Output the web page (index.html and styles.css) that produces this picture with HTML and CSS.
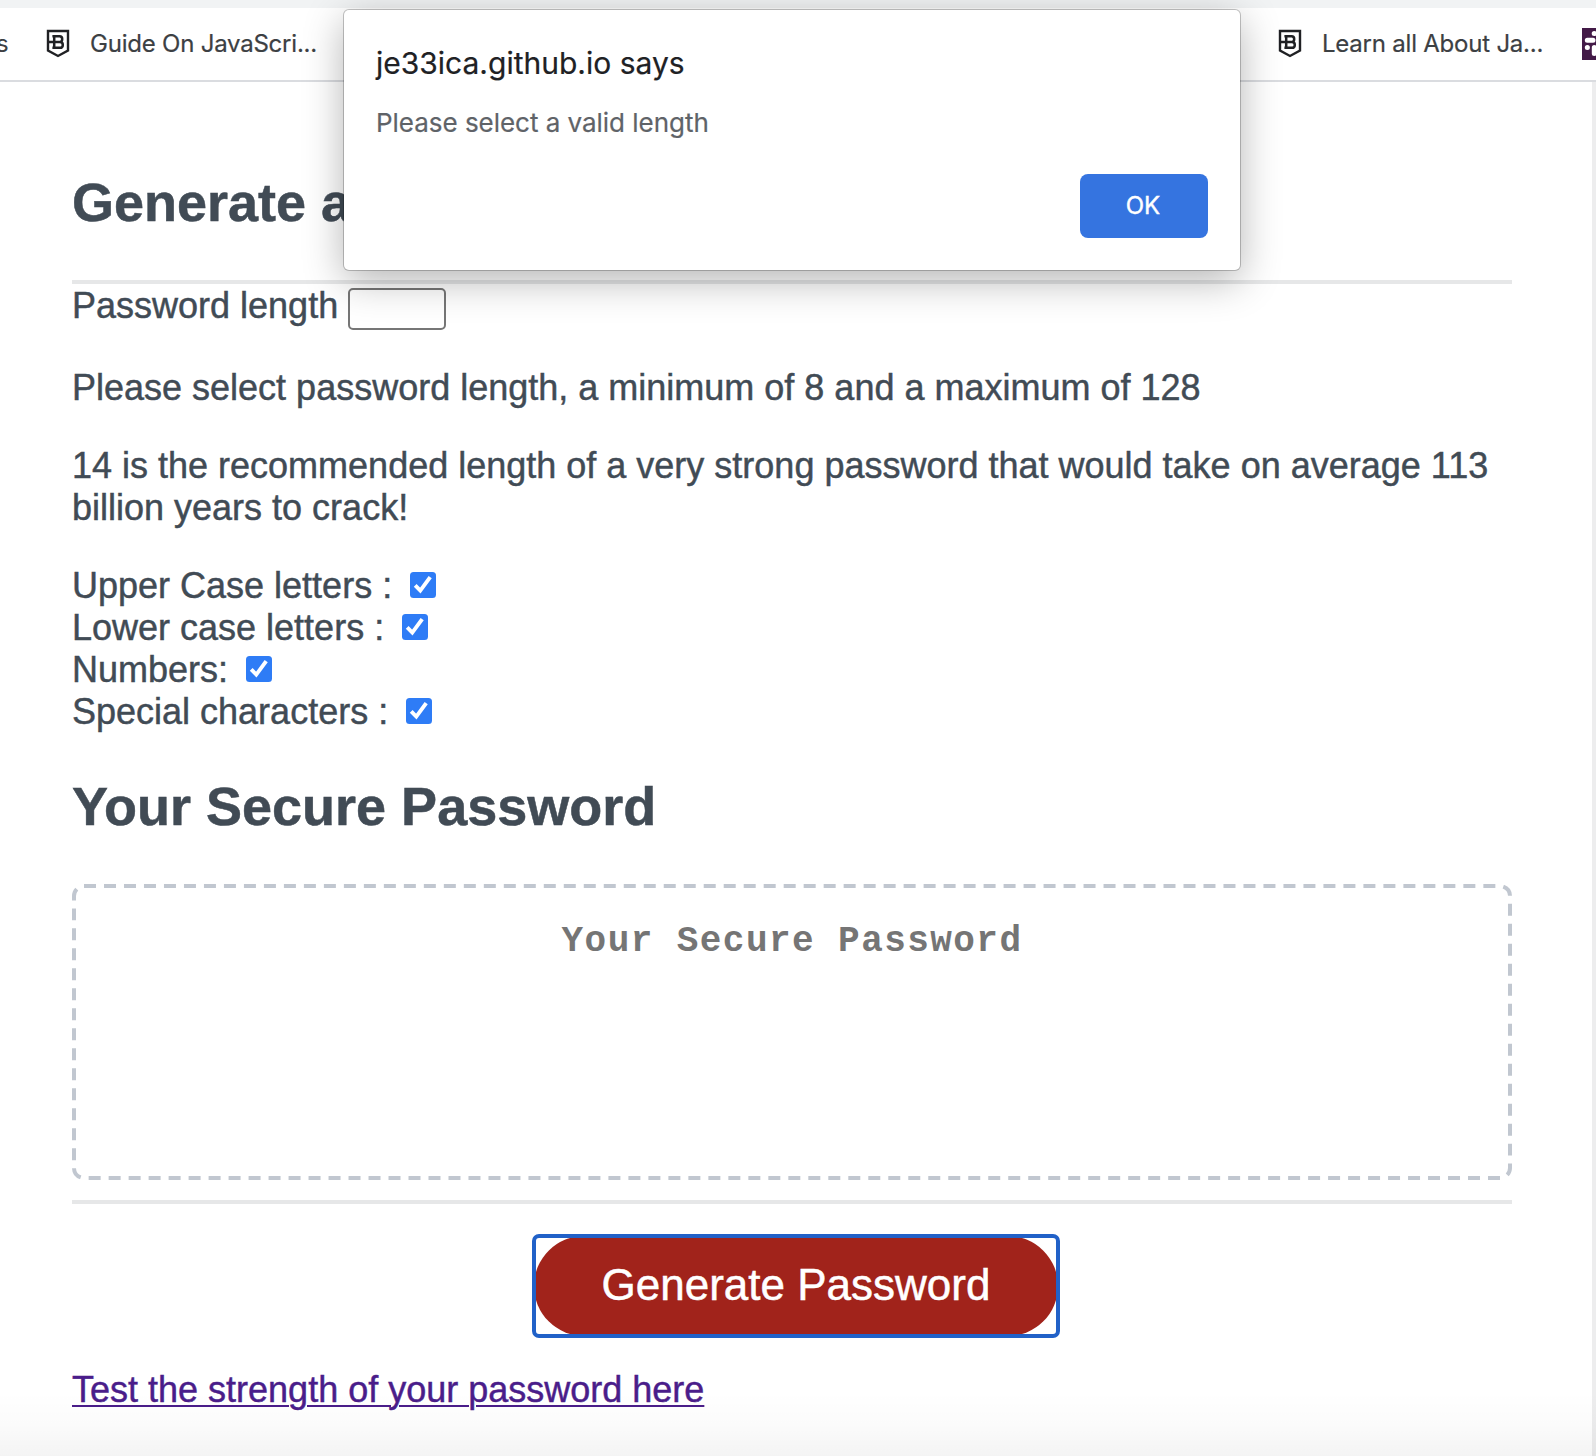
FILE: index.html
```html
<!DOCTYPE html>
<html lang="en">
<head>
<meta charset="utf-8">
<title>Password Generator</title>
<link rel="stylesheet" href="styles.css">
</head>
<body>
<svg class="defs" width="0" height="0">
  <symbol id="shield" viewBox="0 0 24 30">
    <path d="M2 2H22V21.5L12 27L2 21.5Z" fill="none" stroke="#202124" stroke-width="2.4"/>
    <path d="M2 13H15M8.2 7.2V18.8H14Q16.8 18.8 16.8 15.9Q16.8 13 14 13Q16.2 13 16.2 10.1Q16.2 7.2 13.6 7.2H6.4M6.4 18.8H9" fill="none" stroke="#202124" stroke-width="2.5"/>
  </symbol>
  <symbol id="check" viewBox="0 0 26 26">
    <rect width="26" height="26" rx="3.5" fill="#2e7cf6"/>
    <path d="M5.2 13.4L10.3 18.6L20.2 5.2" fill="none" stroke="#fff" stroke-width="3.9"/>
  </symbol>
</svg>
<nav class="bookmarks">
  <span class="tail">s</span>
  <a class="bookmark first"><svg class="shield"><use href="#shield"/></svg><span class="label">Guide On JavaScri...</span></a>
  <a class="bookmark second"><svg class="shield"><use href="#shield"/></svg><span class="label">Learn all About Ja...</span></a>
  <svg class="slack" viewBox="0 0 32 32"><rect width="32" height="32" fill="#431a47"/><g fill="none" stroke="#fff" stroke-width="5" stroke-linecap="round"><path d="M5.3 12.3H11M12.3 19.5V25.5M19.5 6V12.3M21.5 19.5H26.5"/><path d="M12.2 5.5V5.6M5.3 19.5H5.4M26.5 12.3H26.4M19.5 26.5V26.4"/></g></svg>
</nav>
<main class="page">
  <h2 class="title">Generate a Password</h2>
  <section class="options">
    <div class="length"><label for="length">Password length</label><input id="length" class="length-input" type="text"></div>
    <p class="hint">Please select password length, a minimum of 8 and a maximum of 128</p>
    <p class="advice">14 is the recommended length of a very strong password that would take on average 113 billion years to crack!</p>
    <div class="choices">
      <div class="choice"><span>Upper Case letters :</span><svg class="check"><use href="#check"/></svg></div>
      <div class="choice"><span>Lower case letters :</span><svg class="check"><use href="#check"/></svg></div>
      <div class="choice"><span>Numbers:</span><svg class="check"><use href="#check"/></svg></div>
      <div class="choice"><span>Special characters :</span><svg class="check"><use href="#check"/></svg></div>
    </div>
  </section>
  <h2 class="subtitle">Your Secure Password</h2>
  <div class="result">
    <svg class="outline" viewBox="0 0 1440 296"><rect x="2" y="2" width="1436" height="292" rx="10" pathLength="3440"/></svg>
    <span>Your Secure Password</span>
  </div>
  <footer class="actions">
    <div class="focus-ring"><button class="generate">Generate Password</button></div>
  </footer>
  <a class="strength">Test the strength of your password here</a>
</main>
<div class="scroll-edge"></div>
<div class="bottom-fade"></div>
<div class="dialog">
  <div class="origin">je33ica.github.io says</div>
  <div class="message">Please select a valid length</div>
  <button class="ok">OK</button>
</div>
</body>
</html>
```
FILE: styles.css
```css
* { box-sizing: border-box; }
body {
  margin: 0;
  position: relative;
  width: 1596px;
  height: 1456px;
  overflow: hidden;
  background: #fff;
  color: #414b55;
  font: 36px/42px "Liberation Sans", Arial, sans-serif;
}
.defs { position: absolute; }
.bookmarks {
  display: flex;
  align-items: center;
  height: 82px;
  border-top: 8px solid #f1f3f4;
  border-bottom: 2px solid #dadce0;
  overflow: hidden;
  font: 24px/30px Inter, sans-serif;
  letter-spacing: -.22px;
  color: #3c4043;
  white-space: nowrap;
}
.tail { width: 46px; flex: none; margin-left: -4px; }
.bookmark { display: flex; align-items: center; flex: none; }
.first { width: 1232px; margin-left: 4px; }
.second { width: 304px; }
.shield { width: 24px; height: 30px; margin-right: 20px; flex: none; }
.label { display: block; -webkit-text-stroke: .2px currentColor; }
.slack { width: 32px; height: 32px; flex: none; }
.page {
  display: flex;
  flex-direction: column;
  width: 1440px;
  margin-left: 72px;
}
h2, p { margin: 0; }
.title, .subtitle { font-size: 54px; line-height: 62px; font-weight: bold; white-space: nowrap; -webkit-text-stroke: .5px currentColor; }
.title { height: 202px; padding-top: 89px; border-bottom: 4px solid #e6e7e8; }
.options { height: 449px; padding-top: 1px; -webkit-text-stroke: .45px currentColor; }
.length { display: flex; height: 46px; }
.length-input {
  width: 98px;
  height: 42px;
  margin: 3px 0 0 10px;
  border: 2px solid #767676;
  border-radius: 5px;
  background: transparent;
}
.hint { margin-top: 36px; white-space: nowrap; }
.advice { margin: 36px 0; }
.choice { display: flex; height: 42px; }
.check { width: 26px; height: 26px; margin: 7px 0 0 18px; }
.subtitle { padding-top: 42px; height: 151px; }
.result {
  position: relative;
  height: 296px;
  padding-top: 36px;
  font: bold 36px/44px "Liberation Mono", "Courier New", monospace;
  letter-spacing: 1.44px;
  color: #757575;
  text-align: center;
}
.outline { position: absolute; inset: 0; width: 1440px; height: 296px; }
.outline rect { fill: none; stroke: #c1c7d0; stroke-width: 4px; stroke-dasharray: 12 8; }
.actions {
  display: flex;
  height: 169px;
  margin-top: 20px;
  padding: 30px 0 0 460px;
  border-top: 4px solid #e6e7e8;
}
.focus-ring { width: 528px; height: 104px; border: 4px solid #2161c8; border-radius: 7px; overflow: hidden; }
.generate {
  display: block;
  width: 524px;
  height: 100px;
  margin: -2px;
  padding: 0 0 2px;
  border: 0;
  border-radius: 50px;
  background: #a1231b;
  color: #fff;
  font: 44px/50px "Liberation Sans", Arial, sans-serif;
  -webkit-text-stroke: .5px currentColor;
}
.strength {
  align-self: flex-start;
  white-space: nowrap;
  color: #4a1d8a;
  text-decoration: underline;
  text-decoration-thickness: 2px;
  text-underline-offset: 3px;
  -webkit-text-stroke: .45px currentColor;
}
.scroll-edge { position: absolute; top: 82px; right: 0; bottom: 0; width: 4px; background: #ededee; }
.bottom-fade { position: absolute; left: 0; right: 0; bottom: 0; height: 64px; background: linear-gradient(transparent, rgba(0, 0, 0, .015) 50%, rgba(0, 0, 0, .045)); }
.dialog {
  position: absolute;
  left: 344px;
  top: 10px;
  width: 896px;
  height: 260px;
  display: flex;
  flex-direction: column;
  padding: 32px;
  background: #fff;
  border-radius: 5px;
  box-shadow: 0 0 0 1px rgba(0, 0, 0, .22), 0 10px 40px rgba(0, 0, 0, .3);
  font-family: Inter, sans-serif;
  white-space: nowrap;
}
.origin { height: 42px; font-size: 30px; line-height: 42px; color: #202124; -webkit-text-stroke: .2px currentColor; }
.message { height: 36px; margin-top: 21px; font-size: 26px; line-height: 36px; letter-spacing: -.03px; color: #5f6368; -webkit-text-stroke: .2px currentColor; }
.ok {
  width: 128px;
  height: 64px;
  margin-top: 33px;
  padding: 0 2px 0 0;
  align-self: flex-end;
  border: 0;
  border-radius: 8px;
  background: #3574e0;
  color: #fff;
  font: 24px/30px Inter, sans-serif;
  -webkit-text-stroke: .4px currentColor;
}
```
